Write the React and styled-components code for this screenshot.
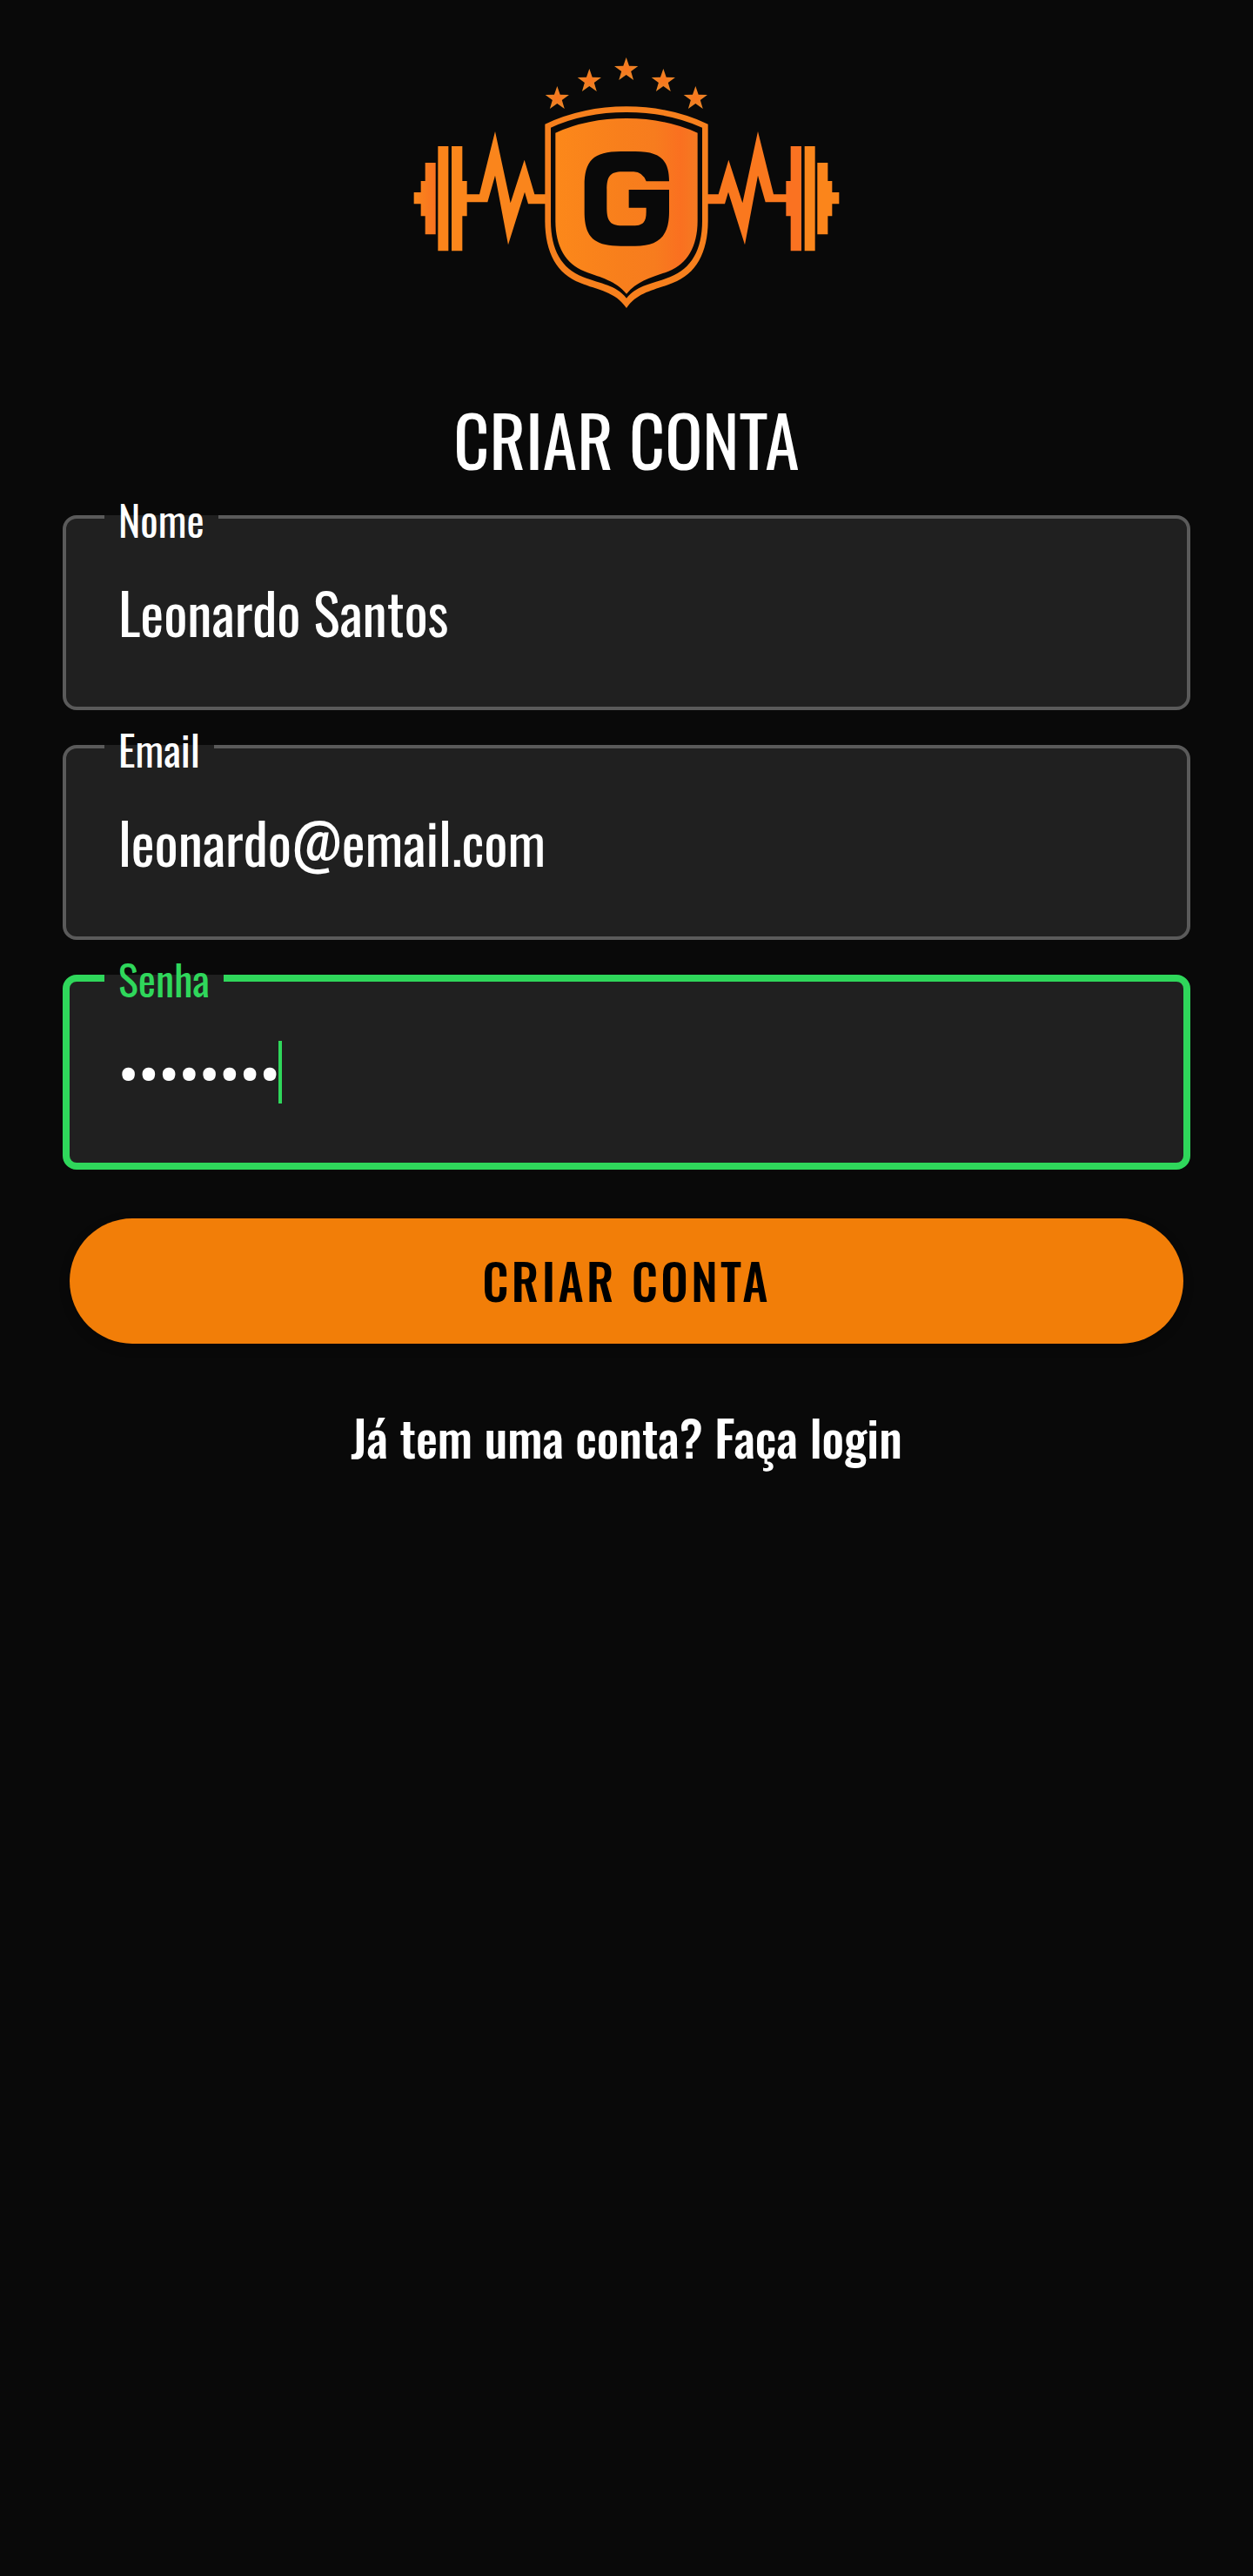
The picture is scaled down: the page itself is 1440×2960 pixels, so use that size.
import React from "react";
import styled, { createGlobalStyle } from "styled-components";

const GlobalStyle = createGlobalStyle`
  *, *::before, *::after { box-sizing: border-box; }
  body {
    margin: 0;
    background: #090909;
    color: #fff;
    font-family: Oswald, "Roboto Condensed", "Open Sans", sans-serif;
  }
`;

const Page = styled.main`
  display: flex;
  flex-direction: column;
  align-items: center;
  width: 1440px;
  min-height: 2960px;
  padding: 50px 72px 0;
`;

const LogoArt = styled.svg`
  display: block;
  width: 520px;
  height: 320px;
`;

const Title = styled.h1`
  margin: 75px 0 0;
  font-size: 80px;
  font-weight: 400;
  line-height: 118px;
  white-space: nowrap;
`;

const Form = styled.form`
  display: flex;
  flex-direction: column;
  gap: 40px;
  width: 100%;
  margin-top: 29px;
`;

const Field = styled.div`
  position: relative;
  display: flex;
  align-items: center;
  height: 224px;
  padding: 0 ${(p) => 64 - (p.$focused ? 8 : 4)}px;
  border: ${(p) => (p.$focused ? "8px solid #2fd75b" : "4px solid #5a5a5a")};
  border-radius: 16px;
  background: #202020;
`;

const Notch = styled.div`
  position: absolute;
  top: ${(p) => (p.$focused ? -8 : -4)}px;
  left: ${(p) => (p.$focused ? 40 : 44)}px;
  height: ${(p) => (p.$focused ? 8 : 4)}px;
  padding: 0 16px;
  background: #202020;
`;

const Label = styled.label`
  display: block;
  margin-top: -31px;
  font-size: 48px;
  line-height: 72px;
  white-space: nowrap;
  color: ${(p) => (p.$focused ? "#2fd75b" : "#fff")};
`;

const Value = styled.span`
  margin-top: -2px;
  font-size: 64px;
  line-height: 94px;
  white-space: nowrap;
`;

const Caret = styled.span`
  width: 4px;
  height: 72px;
  margin-left: -2px;
  background: #2fd75b;
`;

const SubmitButton = styled.button`
  height: 144px;
  margin: 16px 8px 0;
  padding: 0 0 2px;
  border: 0;
  border-radius: 72px;
  background: #f27e08;
  color: #000;
  box-shadow: 0 4px 12px rgba(0, 0, 0, 0.25);
  font-family: inherit;
  font-size: 56px;
  font-weight: 500;
  letter-spacing: 3.36px;
  line-height: 84px;
`;

const LoginLink = styled.a`
  margin-top: 65px;
  font-size: 56px;
  font-weight: 500;
  line-height: 84px;
  white-space: nowrap;
  color: #fff;
`;

const starPoints = (cx, cy, r) =>
  Array.from({ length: 10 }, (_, i) => {
    const radius = i % 2 ? r * 0.4 : r;
    const angle = (Math.PI / 5) * i - Math.PI / 2;
    return `${(cx + radius * Math.cos(angle)).toFixed(1)},${(cy + radius * Math.sin(angle)).toFixed(1)}`;
  }).join(" ");

const STARS = [
  [541, 190],
  [652, 130],
  [779, 91],
  [907, 130],
  [1018, 190],
];

const PULSE =
  "M228 520H273L327 303L380 550L428 401L463 520H502V553H441L429 512L372 694L327 455L301 547H228Z";
const END_PLATE = "M47 513H71V474H86V411H122V658H86V595H71V553H47Z";
const MIDDLE_PLATE = "M130 354H166V715H130Z";
const INNER_PLATE = "M177 354H214V474H230V595H214V715H177Z";

function Logo() {
  return (
    <LogoArt viewBox="0 0 1560 960" role="img">
      <defs>
        <linearGradient id="plate" x1="0" x2="1">
          <stop offset="0" stopColor="#fb871b" />
          <stop offset="1" stopColor="#f87220" />
        </linearGradient>
        <linearGradient id="shield" x1="0" x2="1">
          <stop offset="0" stopColor="#fc881a" />
          <stop offset="0.45" stopColor="#f87f1c" />
          <stop offset="0.7" stopColor="#f77c1e" />
          <stop offset="0.88" stopColor="#fa7020" />
          <stop offset="1" stopColor="#f47a22" />
        </linearGradient>
        <radialGradient id="star">
          <stop offset="0" stopColor="#fb751c" />
          <stop offset="1" stopColor="#e88628" />
        </radialGradient>
      </defs>
      {STARS.map(([x, y]) => (
        <polygon key={x} points={starPoints(x, y, 43)} fill="url(#star)" />
      ))}
      <path d={END_PLATE} fill="url(#plate)" />
      <path d={MIDDLE_PLATE} fill="#fc841a" />
      <path d={INNER_PLATE} fill="#fb861b" />
      <path d={PULSE} fill="#fa851c" />
      <g transform="translate(1560 0) scale(-1 1)">
        <path d={END_PLATE} fill="#fb851b" />
        <path d={MIDDLE_PLATE} fill="#fa861c" />
        <path d={INNER_PLATE} fill="#fa7221" />
        <path d={PULSE} fill="#fa781e" />
      </g>
      <g transform="translate(480 180)">
        <path
          d="M19 98Q150 37 300 37Q450 37 581 98V430C581 540 540 615 460 645C400 670 338 675 300 732C262 675 200 670 140 645C60 615 19 540 19 430Z"
          fill="#f7801d"
        />
        <path
          d="M39 110Q155 57 300 57Q445 57 561 110V430C561 530 525 595 450 625C385 650 338 652 300 698C262 652 215 650 150 625C75 595 39 530 39 430Z"
          fill="#090909"
        />
        <path
          d="M55 128Q165 78 300 78Q435 78 545 128V430C545 520 510 580 445 605C385 628 338 637 300 683C262 637 215 628 155 605C90 580 55 520 55 430Z"
          fill="url(#shield)"
        />
        <path
          d="M447 295H368Q355 263 325 262H285C242 262 232 280 232 325V385C232 430 242 448 285 448H322C358 448 368 435 368 400V386H308V324H447V400C447 485 410 518 330 518H280C185 518 155 485 155 400V310C155 225 185 192 280 192H330C415 192 447 220 447 295Z"
          fill="#090909"
        />
      </g>
    </LogoArt>
  );
}

function OutlinedField({ label, value, focused }) {
  return (
    <Field $focused={focused}>
      <Notch $focused={focused}>
        <Label $focused={focused}>{label}</Label>
      </Notch>
      <Value>{value}</Value>
      {focused && <Caret />}
    </Field>
  );
}

export default function App() {
  return (
    <>
      <GlobalStyle />
      <Page>
        <Logo />
        <Title>CRIAR CONTA</Title>
        <Form>
          <OutlinedField label="Nome" value="Leonardo Santos" />
          <OutlinedField label="Email" value="leonardo@email.com" />
          <OutlinedField label="Senha" value="••••••••" focused />
          <SubmitButton type="button">CRIAR CONTA</SubmitButton>
        </Form>
        <LoginLink>Já tem uma conta? Faça login</LoginLink>
      </Page>
    </>
  );
}
